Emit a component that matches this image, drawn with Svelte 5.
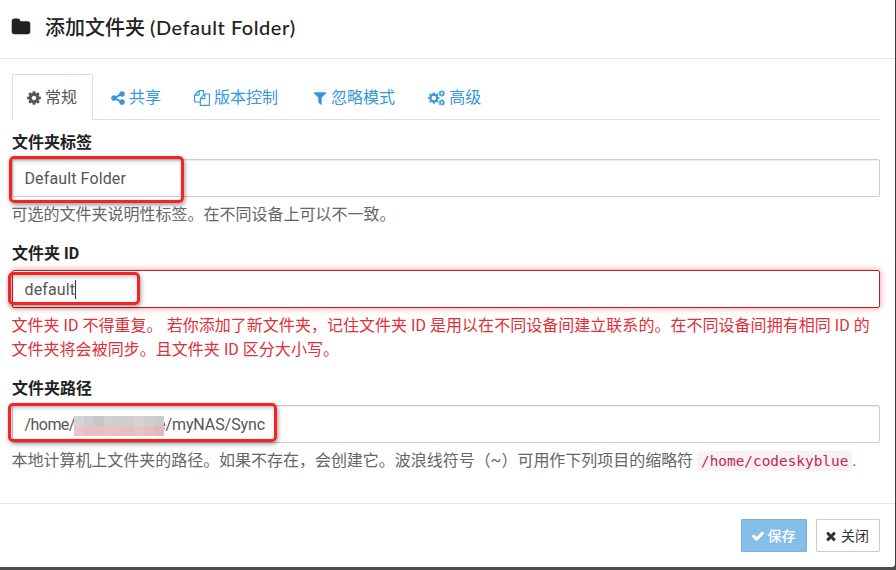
<script>
  const paths = {
    folder: 'M1728 608v704q0 92-66 158t-158 66H288q-92 0-158-66T64 1312V352q0-92 66-158t158-66h320q92 0 158 66t66 158v32h672q92 0 158 66t66 158z',
    cog: 'M1152 896q0-106-75-181t-181-75-181 75-75 181 75 181 181 75 181-75 75-181zm512-109v222q0 12-8 23t-20 13l-185 28q-19 54-39 91 35 50 107 138 10 12 10 25t-9 23q-27 37-99 108t-94 71q-12 0-26-9l-138-108q-44 23-91 38-16 136-29 186-7 28-36 28H785q-14 0-24.500-8.500T749 1634l-28-184q-49-16-90-37l-141 107q-10 9-25 9-14 0-25-11-126-114-165-168-7-10-7-23 0-12 8-23 15-21 51-66.500t54-70.500q-27-50-41-99l-183-27q-13-2-21-12.500t-8-23.500V783q0-12 8-23t19-13l186-28q14-46 39-92-40-57-107-138-10-12-10-24 0-10 9-23 26-36 98.500-107.500T465 263q13 0 26 10l138 107q44-23 91-38 16-136 29-186 7-28 36-28h222q14 0 24.500 8.500T1043 158l28 184q49 16 90 37l142-107q9-9 24-9 13 0 25 10 129 119 165 170 7 8 7 22 0 12-8 23-15 21-51 66.500t-54 70.500q26 50 41 98l183 28q13 2 21 12.500t8 23.500z',
    share: 'M1344 1024q133 0 226.500 93.500t93.500 226.500-93.500 226.500-226.500 93.500-226.500-93.500-93.500-226.500q0-12 2-34l-360-180q-92 86-218 86-133 0-226.500-93.500T128 896t93.500-226.500T448 576q126 0 218 86l360-180q-2-22-2-34 0-133 93.500-226.500T1344 128t226.500 93.500T1664 448t-93.500 226.500T1344 768q-126 0-218-86L766 862q2 22 2 34t-2 34l360 180q92-86 218-86z',
    files: 'M1696 384q40 0 68 28t28 68v1216q0 40-28 68t-68 28H736q-40 0-68-28t-28-68v-288H96q-40 0-68-28t-28-68V640q0-40 20-88t48-76L476 68q28-28 76-48t88-20h416q40 0 68 28t28 68v328q68-40 128-40h416zm-544 213L853 896h299V597zM512 213L213 512h299V213zm196 647l316-316V128H640v416q0 40-28 68t-68 28H128v640h512v-256q0-40 20-88t48-76zm956 804V512h-384v416q0 40-28 68t-68 28H768v640h896z',
    filter: 'M1595 295q17 41-14 70l-493 493v742q0 42-39 59-13 5-25 5-27 0-45-19l-256-256q-19-19-19-45V858L211 365q-31-29-14-70 17-39 59-39h1280q42 0 59 39z',
    check: 'M1671 566q0 40-28 68l-724 724-136 136q-28 28-68 28t-68-28l-136-136-362-362q-28-28-28-68t28-68l136-136q28-28 68-28t68 28l294 295 656-657q28-28 68-28t68 28l136 136q28 28 28 68z',
    times: 'M1490 1322q0 40-28 68l-136 136q-28 28-68 28t-68-28l-294-294-294 294q-28 28-68 28t-68-28l-136-136q-28-28-28-68t28-68l294-294-294-294q-28-28-28-68t28-68l136-136q28-28 68-28t68 28l294 294 294-294q28-28 68-28t68 28l136 136q28 28 28 68t-28 68l-294 294 294 294q28 28 28 68z',
    cogs: gear(640, 896, 640, 490, 256) + gear(1536, 384, 375, 265, 128) + gear(1536, 1408, 375, 265, 128)
  };

  // Eight-toothed gear with a round hole.
  function gear(cx, cy, outer, inner, hole) {
    const pts = [];
    for (let i = 0; i < 8; i++) {
      for (const [r, d] of [[inner, -0.24], [outer, -0.18], [outer, 0.18], [inner, 0.24]]) {
        const a = (i * Math.PI) / 4 + d;
        pts.push(`${(cx + r * Math.cos(a)).toFixed(0)} ${(cy + r * Math.sin(a)).toFixed(0)}`);
      }
    }
    return `M${pts.join('L')}ZM${cx - hole} ${cy}a${hole} ${hole} 0 1 0 ${2 * hole} 0a${hole} ${hole} 0 1 0 ${-2 * hole} 0Z`;
  }

  const tabs = [
    { icon: 'cog', text: '常规', w: 80 },
    { icon: 'share', text: '共享', w: 82 },
    { icon: 'files', text: '版本控制', w: 116 },
    { icon: 'filter', text: '忽略模式', w: 114 },
    { icon: 'cogs', text: '高级', w: 86 }
  ];
  const mosaic = [
    ['#d6d3d5', '#cecccd', '#c8c5c7', '#d1cfd0', '#d0cdcf', '#d0cdcf', '#d5d3d4', '#d0cece', '#cecbcd'],
    ['#e8c5c8', '#e6c0c3', '#e6c0c3', '#e7c3c5', '#e6c1c3', '#e5bfc2', '#e6c4c6', '#e3bfc2', '#dfb9bc']
  ];
</script>

{#snippet icon(name, size)}
  <svg width={name === 'cogs' ? size * 1.08 : size} height={size} viewBox={name === 'cogs' ? '0 0 1920 1792' : '0 0 1792 1792'} fill="currentColor" fill-rule="evenodd" aria-hidden="true"><path d={paths[name]} /></svg>
{/snippet}

<div class="modal">
  <header>{@render icon('folder', 20)}<h4>添加文件夹 <span>(Default Folder)</span></h4></header>

  <main>
    <nav>
      {#each tabs as tab, i}
        <a class:active={i === 0} class={tab.icon} style:width="{tab.w}px">{@render icon(tab.icon, 16)}<span>{tab.text}</span></a>
      {/each}
    </nav>

    <section>
      <div class="label">文件夹标签</div>
      <div class="input">Default Folder<i class="mark first"></i></div>
      <p>可选的文件夹说明性标签。在不同设备上可以不一致。</p>
    </section>

    <section class="error">
      <div class="label">文件夹 ID</div>
      <div class="input">default<b class="caret"></b><i class="mark second"></i></div>
      <p>文件夹 ID 不得重复。 若你添加了新文件夹，记住文件夹 ID 是用以在不同设备间建立联系的。在不同设备间拥有相同 ID 的<br />文件夹将会被同步。且文件夹 ID 区分大小写。</p>
    </section>

    <section>
      <div class="label">文件夹路径</div>
      <div class="input">
        <span class="home">/home/</span>
        <svg class="mosaic" width="90" height="20" viewBox="0 0 90 20" shape-rendering="crispEdges">
          {#each mosaic as row, y}
            {#each row as color, x}<rect x={x * 10} y={y * 10} width="10" height="10" fill={color} />{/each}
          {/each}
        </svg>
        <span class="rest">e/myNAS/Sync</span>
        <i class="mark third"></i>
      </div>
      <p class="path-help">本地计算机上文件夹的路径。如果不存在，会创建它。波浪线符号（~）可用作下列项目的缩略符 <code>/home/codeskyblue</code>.</p>
    </section>
  </main>

  <footer>
    <button class="save">{@render icon('check', 14)}<span>保存</span></button>
    <button class="close">{@render icon('times', 14)}<span>关闭</span></button>
  </footer>
</div>

<style>
  :global(body) { background: #4c4d4f; overflow: hidden; }
  .modal { box-sizing: border-box; width: 895px; height: 567px; background: #fff; border-radius: 0 0 3px 0; box-shadow: 0 0 3px #222; font: 16px/24px Roboto, "Noto Sans CJK SC", sans-serif; color: #555; }
  svg { display: block; flex: none; }
  header { box-sizing: border-box; height: 59px; padding: 0 11px 5px; border-bottom: 1px solid #e5e5e5; display: flex; align-items: center; gap: 14px; color: #222; }
  h4 { margin: 0; font: 500 20px/24px Lato, "Noto Sans CJK SC", sans-serif; white-space: pre; }
  h4 span { letter-spacing: .52px; }
  main { height: 444px; padding: 15px 15px 0 12px; box-sizing: border-box; }
  nav { display: flex; height: 46px; box-sizing: border-box; border-bottom: 1px solid #ddd; gap: 2px; }
  a { box-sizing: border-box; flex: none; height: 46px; display: flex; align-items: center; padding: 2px 0 0 15px; gap: 3px; color: #3498db; white-space: nowrap; border: 1px solid transparent; }
  a.active { width: 81px !important; margin-right: -1px; color: #555; background: #fff; border-color: #ddd #ddd #fff; border-radius: 2px 2px 0 0; padding-left: 13px; }
  a.files, a.cogs { gap: 4px; }
  section { height: 111px; padding-top: 11px; box-sizing: border-box; }
  section.error { height: 135px; }
  .label { height: 28px; line-height: 24px; font-weight: 700; color: #222; }
  .input { position: relative; box-sizing: border-box; height: 38px; padding: 2px 11px 0 11.5px; display: flex; align-items: center; border: 1px solid #ccc; border-radius: 2px; box-shadow: inset 0 1px 1px rgba(0,0,0,.075); letter-spacing: .12px; }
  p { margin: 6px 0 0 -.5px; white-space: nowrap; color: #666; }
  .path-help { letter-spacing: -.03px; }
  .error p { color: #df3039; letter-spacing: .03px; }
  .error .input { border-color: #b9202a; box-shadow: 0 0 6px rgba(223,48,57,.55); }
  .caret { width: 1px; height: 19px; margin-top: -2px; background: #333; }
  .mark { position: absolute; box-sizing: border-box; border: 3px solid #f72323; border-radius: 5px; box-shadow: 1px 2px 4px rgba(0,0,0,.4), inset 1px 2px 4px rgba(0,0,0,.22); }
  .first { left: -4px; top: -4px; width: 175px; height: 47px; }
  .second { left: -5px; top: 1px; width: 132px; height: 33px; }
  .third { left: -5px; top: -3px; width: 269px; height: 39px; }
  .home { width: 49.5px; letter-spacing: -.55px; }
  .mosaic { z-index: 1; margin-top: 2px; }
  .rest { margin-left: -7px; letter-spacing: -.08px; }
  code { font: 14.4px/19px "DejaVu Sans Mono", monospace; letter-spacing: 0; color: #c7254e; background: #f9f2f4; border-radius: 3px; padding: 2px 4px; }
  footer { height: 64px; box-sizing: border-box; border-top: 1px solid #e5e5e5; padding: 15px 15px 0; display: flex; justify-content: flex-end; gap: 9px; }
  button { box-sizing: border-box; height: 33px; padding: 0; border: 1px solid #ccc; border-radius: 1px; background: #fff; color: #333; display: flex; align-items: center; justify-content: center; gap: 3px; font: 14px/20px Roboto, "Noto Sans CJK SC", sans-serif; }
  .save { width: 66px; padding-right: 2px; color: #fff; background: #85bfe9; border-color: #77b3df; font-weight: 500; }
  .close { width: 64px; padding-right: 3px; }
</style>
